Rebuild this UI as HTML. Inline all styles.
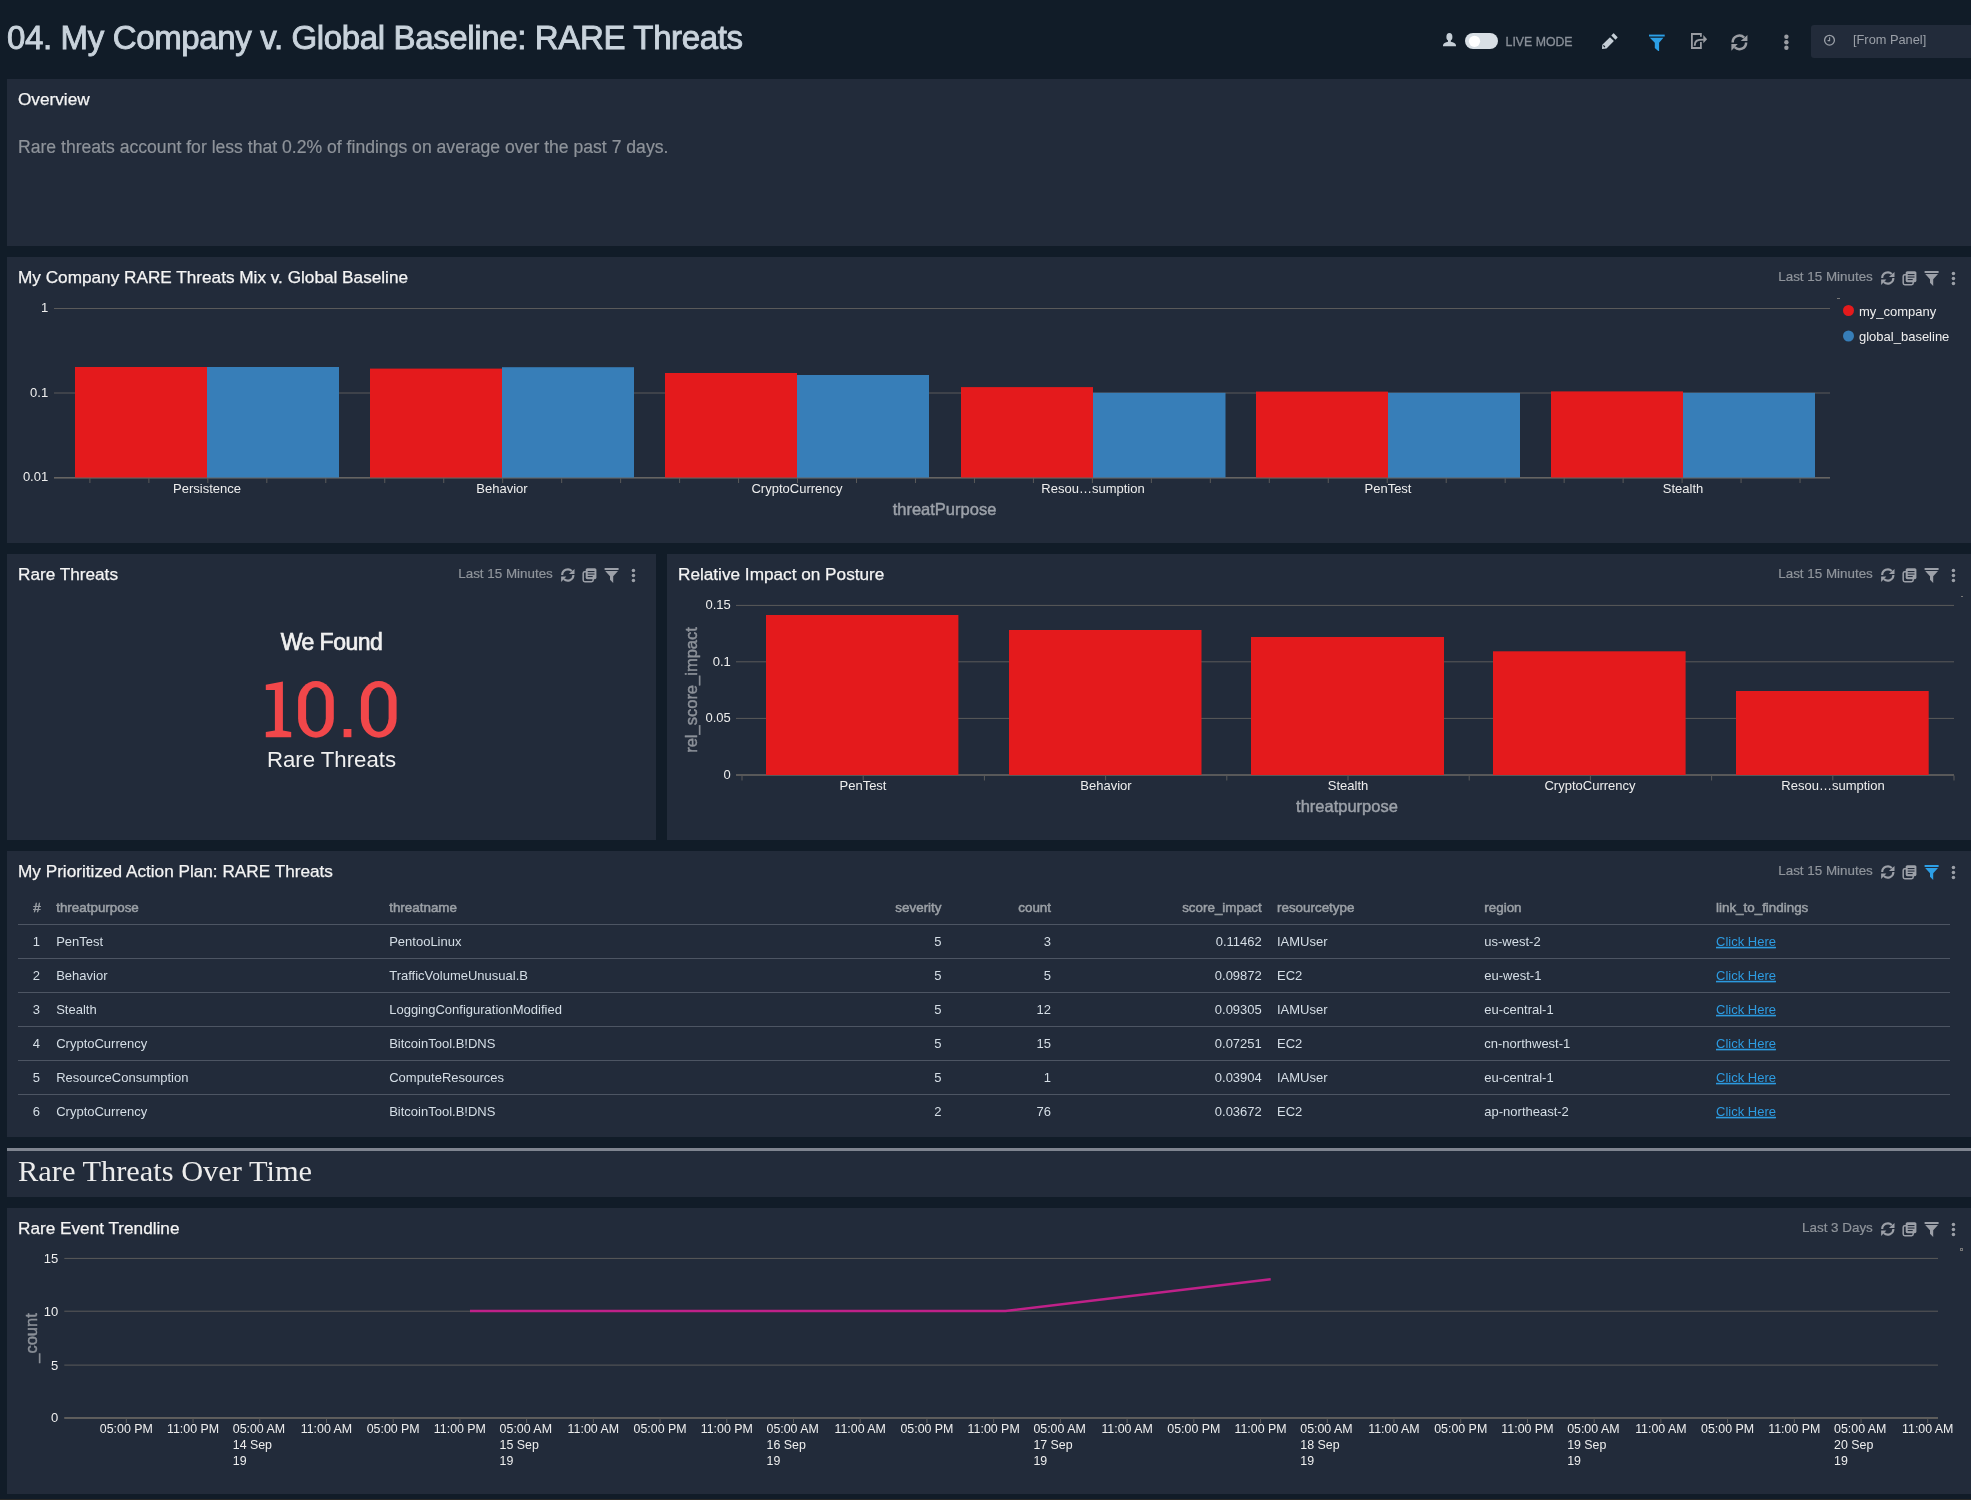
<!DOCTYPE html>
<html><head><meta charset="utf-8">
<style>
html,body{margin:0;padding:0}
body{width:1971px;height:1500px;overflow:hidden;background:#111c28;position:relative;font-family:"Liberation Sans",sans-serif;color:#f0f0f0}
#w{position:absolute;left:0;top:0;width:1971px;height:1500px;will-change:transform}
.a{position:absolute;white-space:nowrap}
.panel{position:absolute;background:#222b3a}
.ptitle{position:absolute;left:11px;top:10px;font-size:17.2px;color:#f4f4f4;white-space:nowrap;-webkit-text-stroke:0.25px #f4f4f4}
svg{position:absolute;left:0;top:0}
</style></head><body><div id="w">
<div class="a" style="left:7px;top:19px;font-size:33px;letter-spacing:-0.36px;color:#c9d3dc;-webkit-text-stroke:0.9px #c9d3dc">04. My Company v. Global Baseline: RARE Threats</div>
<div class="a" style="left:1811px;top:25px;width:170px;height:33px;border-radius:3px;background:#222b3a"></div>
<div class="a" style="left:1853px;top:32px;font-size:12.8px;color:#9ba0a8">[From Panel]</div>
<div class="panel" style="left:7px;top:79px;width:1969px;height:167px;">
<div class="ptitle">Overview</div>
</div>
<div class="a" style="left:18px;top:137px;font-size:17.6px;color:#8e939a;-webkit-text-stroke:0.2px #8e939a">Rare threats account for less that 0.2% of findings on average over the past 7 days.</div>
<div class="panel" style="left:7px;top:257px;width:1969px;height:286px;">
<div class="ptitle">My Company RARE Threats Mix v. Global Baseline</div>
</div>
<div class="panel" style="left:7px;top:554px;width:649px;height:286px;">
<div class="ptitle">Rare Threats</div>
</div>
<div class="panel" style="left:667px;top:554px;width:1309px;height:286px;">
<div class="ptitle">Relative Impact on Posture</div>
</div>
<div class="panel" style="left:7px;top:851px;width:1969px;height:286px;">
<div class="ptitle">My Prioritized Action Plan: RARE Threats</div>
</div>
<div class="panel" style="left:7px;top:1148px;width:1969px;height:49px;border-top:3px solid #7f8590;box-sizing:border-box"></div>
<div class="a" style="left:18px;top:1154px;font-family:'Liberation Serif',serif;font-size:30.4px;color:#ececec">Rare Threats Over Time</div>
<div class="panel" style="left:7px;top:1208px;width:1969px;height:286px;">
<div class="ptitle">Rare Event Trendline</div>
</div>
<div class="a" style="left:7px;width:649px;top:629px;text-align:center;font-size:23px;letter-spacing:-0.5px;-webkit-text-stroke:0.7px #f0f0f0;color:#f0f0f0">We Found</div>
<div class="a" style="left:7px;width:649px;top:747px;text-align:center;font-size:22.2px;color:#f0f0f0">Rare Threats</div>
<svg width="1971" height="1500" viewBox="0 0 1971 1500"><rect x="54" y="308.0" width="1776" height="1" fill="#5a5a5a" />
<rect x="54" y="392.5" width="1776" height="1" fill="#5a5a5a" />
<rect x="54" y="477.0" width="1776" height="1" fill="#5a5a5a" />
<rect x="54" y="477" width="1776" height="1.6" fill="#666462" />
<text x="48.2" y="312" font-family="Liberation Sans" font-size="13" fill="#eeeeee" text-anchor="end" font-weight="normal" >1</text>
<text x="48.2" y="396.5" font-family="Liberation Sans" font-size="13" fill="#eeeeee" text-anchor="end" font-weight="normal" >0.1</text>
<text x="48.2" y="480.5" font-family="Liberation Sans" font-size="13" fill="#eeeeee" text-anchor="end" font-weight="normal" >0.01</text>
<rect x="75" y="367" width="132" height="110.5" fill="#e41a1c" />
<rect x="370" y="368.6" width="132" height="108.89999999999998" fill="#e41a1c" />
<rect x="665" y="373" width="132" height="104.5" fill="#e41a1c" />
<rect x="961" y="387.1" width="132" height="90.39999999999998" fill="#e41a1c" />
<rect x="1256" y="391.6" width="132" height="85.89999999999998" fill="#e41a1c" />
<rect x="1551" y="391.4" width="132" height="86.10000000000002" fill="#e41a1c" />
<rect x="207" y="367" width="132" height="110.5" fill="#377eb8" />
<rect x="502" y="367.2" width="132" height="110.30000000000001" fill="#377eb8" />
<rect x="797" y="375" width="132" height="102.5" fill="#377eb8" />
<rect x="1093" y="392.8" width="132.5" height="84.69999999999999" fill="#377eb8" />
<rect x="1388" y="392.8" width="132" height="84.69999999999999" fill="#377eb8" />
<rect x="1683" y="392.8" width="132" height="84.69999999999999" fill="#377eb8" />
<rect x="89.4" y="478" width="1" height="5" fill="#5a5a5a" />
<rect x="148.37" y="478" width="1" height="5" fill="#5a5a5a" />
<rect x="207.34" y="478" width="1" height="5" fill="#5a5a5a" />
<rect x="266.31" y="478" width="1" height="5" fill="#5a5a5a" />
<rect x="325.28" y="478" width="1" height="5" fill="#5a5a5a" />
<rect x="384.25" y="478" width="1" height="5" fill="#5a5a5a" />
<rect x="443.22" y="478" width="1" height="5" fill="#5a5a5a" />
<rect x="502.18999999999994" y="478" width="1" height="5" fill="#5a5a5a" />
<rect x="561.16" y="478" width="1" height="5" fill="#5a5a5a" />
<rect x="620.13" y="478" width="1" height="5" fill="#5a5a5a" />
<rect x="679.1" y="478" width="1" height="5" fill="#5a5a5a" />
<rect x="738.0699999999999" y="478" width="1" height="5" fill="#5a5a5a" />
<rect x="797.04" y="478" width="1" height="5" fill="#5a5a5a" />
<rect x="856.01" y="478" width="1" height="5" fill="#5a5a5a" />
<rect x="914.9799999999999" y="478" width="1" height="5" fill="#5a5a5a" />
<rect x="973.9499999999999" y="478" width="1" height="5" fill="#5a5a5a" />
<rect x="1032.92" y="478" width="1" height="5" fill="#5a5a5a" />
<rect x="1091.89" y="478" width="1" height="5" fill="#5a5a5a" />
<rect x="1150.8600000000001" y="478" width="1" height="5" fill="#5a5a5a" />
<rect x="1209.8300000000002" y="478" width="1" height="5" fill="#5a5a5a" />
<rect x="1268.8000000000002" y="478" width="1" height="5" fill="#5a5a5a" />
<rect x="1327.77" y="478" width="1" height="5" fill="#5a5a5a" />
<rect x="1386.74" y="478" width="1" height="5" fill="#5a5a5a" />
<rect x="1445.71" y="478" width="1" height="5" fill="#5a5a5a" />
<rect x="1504.68" y="478" width="1" height="5" fill="#5a5a5a" />
<rect x="1563.65" y="478" width="1" height="5" fill="#5a5a5a" />
<rect x="1622.6200000000001" y="478" width="1" height="5" fill="#5a5a5a" />
<rect x="1681.5900000000001" y="478" width="1" height="5" fill="#5a5a5a" />
<rect x="1740.56" y="478" width="1" height="5" fill="#5a5a5a" />
<rect x="1799.53" y="478" width="1" height="5" fill="#5a5a5a" />
<text x="207" y="493" font-family="Liberation Sans" font-size="13" fill="#eeeeee" text-anchor="middle" font-weight="normal" >Persistence</text>
<text x="502" y="493" font-family="Liberation Sans" font-size="13" fill="#eeeeee" text-anchor="middle" font-weight="normal" >Behavior</text>
<text x="797" y="493" font-family="Liberation Sans" font-size="13" fill="#eeeeee" text-anchor="middle" font-weight="normal" >CryptoCurrency</text>
<text x="1093" y="493" font-family="Liberation Sans" font-size="13" fill="#eeeeee" text-anchor="middle" font-weight="normal" >Resou…sumption</text>
<text x="1388" y="493" font-family="Liberation Sans" font-size="13" fill="#eeeeee" text-anchor="middle" font-weight="normal" >PenTest</text>
<text x="1683" y="493" font-family="Liberation Sans" font-size="13" fill="#eeeeee" text-anchor="middle" font-weight="normal" >Stealth</text>
<text x="944.5" y="515.2" font-family="Liberation Sans" font-size="16.5" fill="#9ca1a9" text-anchor="middle" font-weight="normal" stroke="#9ca1a9" stroke-width="0.45">threatPurpose</text>
<circle cx="1848.5" cy="310.5" r="5.5" fill="#e41a1c"/>
<circle cx="1848.5" cy="336" r="5.5" fill="#377eb8"/>
<text x="1859" y="315.5" font-family="Liberation Sans" font-size="13" fill="#eeeeee" text-anchor="start" font-weight="normal" >my_company</text>
<text x="1859" y="341" font-family="Liberation Sans" font-size="13" fill="#eeeeee" text-anchor="start" font-weight="normal" >global_baseline</text>
<rect x="1837" y="298" width="3" height="1" fill="#777" />
<text x="1872.8" y="281" font-family="Liberation Sans" font-size="13.4" fill="#8f949b" text-anchor="end" font-weight="normal" stroke="#8f949b" stroke-width="0.2">Last 15 Minutes</text>
<g transform="translate(1880.8,271) scale(1.0)" fill="none" stroke="#9ca0a8" stroke-width="2.1"><path d="M1.4 7.0 A5.6 5.6 0 0 1 10.96 3.04"/><path d="M12.6 7.0 A5.6 5.6 0 0 1 3.04 10.96"/></g>
<g transform="translate(1880.8,271) scale(1.0)" fill="#9ca0a8"><path d="M13.7 0.9 L13.7 5.9 L8.1 5.9 Z"/><path d="M0.3 13.9 L0.3 8.4 L5.6 8.4 Z"/></g>
<g transform="translate(1902.4,271.2)"><rect x="0.8" y="3.5" width="10" height="10" rx="1.6" fill="none" stroke="#9ca0a8" stroke-width="1.5"/><rect x="3.3" y="0" width="10.7" height="11" rx="1.6" fill="#9ca0a8"/><rect x="5.3" y="2.8" width="6.8" height="1.1" fill="#222b3a"/><rect x="5.3" y="5.3" width="6.8" height="1.1" fill="#222b3a"/><rect x="5.3" y="7.8" width="5" height="1.1" fill="#222b3a"/></g>
<g transform="translate(1924.6,271) scale(1.0)" fill="#9ca0a8"><rect x="0" y="0" width="14" height="2"/><path d="M0.6 3 L13.4 3 L8.6 8.2 L8.6 15 L5.4 11.8 L5.4 8.2 Z"/></g>
<circle cx="1953.45" cy="273.55" r="1.75" fill="#9ca0a8"/>
<circle cx="1953.45" cy="278.55" r="1.75" fill="#9ca0a8"/>
<circle cx="1953.45" cy="283.55" r="1.75" fill="#9ca0a8"/>
<text x="552.8" y="578" font-family="Liberation Sans" font-size="13.4" fill="#8f949b" text-anchor="end" font-weight="normal" stroke="#8f949b" stroke-width="0.2">Last 15 Minutes</text>
<g transform="translate(560.8,568) scale(1.0)" fill="none" stroke="#9ca0a8" stroke-width="2.1"><path d="M1.4 7.0 A5.6 5.6 0 0 1 10.96 3.04"/><path d="M12.6 7.0 A5.6 5.6 0 0 1 3.04 10.96"/></g>
<g transform="translate(560.8,568) scale(1.0)" fill="#9ca0a8"><path d="M13.7 0.9 L13.7 5.9 L8.1 5.9 Z"/><path d="M0.3 13.9 L0.3 8.4 L5.6 8.4 Z"/></g>
<g transform="translate(582.4,568.2)"><rect x="0.8" y="3.5" width="10" height="10" rx="1.6" fill="none" stroke="#9ca0a8" stroke-width="1.5"/><rect x="3.3" y="0" width="10.7" height="11" rx="1.6" fill="#9ca0a8"/><rect x="5.3" y="2.8" width="6.8" height="1.1" fill="#222b3a"/><rect x="5.3" y="5.3" width="6.8" height="1.1" fill="#222b3a"/><rect x="5.3" y="7.8" width="5" height="1.1" fill="#222b3a"/></g>
<g transform="translate(604.6,568) scale(1.0)" fill="#9ca0a8"><rect x="0" y="0" width="14" height="2"/><path d="M0.6 3 L13.4 3 L8.6 8.2 L8.6 15 L5.4 11.8 L5.4 8.2 Z"/></g>
<circle cx="633.45" cy="570.55" r="1.75" fill="#9ca0a8"/>
<circle cx="633.45" cy="575.55" r="1.75" fill="#9ca0a8"/>
<circle cx="633.45" cy="580.55" r="1.75" fill="#9ca0a8"/>
<path d="M265.8 684.8 L282.9 681.6 L282.9 730.6 L291.2 731.9 L291.2 737.2 L265.8 737.2 L265.8 731.9 L274.9 730.6 L274.9 690.1 L265.8 690.1 Z" fill="#f2474a"/>
<rect x="298.1" y="681" width="35.7" height="56.7" rx="17.85" ry="19.5" fill="#f2474a"/>
<rect x="306.1" y="687.2" width="19.7" height="44.6" rx="9.85" ry="13.5" fill="#222b3a"/>
<rect x="360.90000000000003" y="681" width="35.7" height="56.7" rx="17.85" ry="19.5" fill="#f2474a"/>
<rect x="368.90000000000003" y="687.2" width="19.7" height="44.6" rx="9.85" ry="13.5" fill="#222b3a"/>
<rect x="343.6" y="729" width="7.8" height="8.2" fill="#f2474a"/>
<text x="1872.8" y="578" font-family="Liberation Sans" font-size="13.4" fill="#8f949b" text-anchor="end" font-weight="normal" stroke="#8f949b" stroke-width="0.2">Last 15 Minutes</text>
<g transform="translate(1880.8,568) scale(1.0)" fill="none" stroke="#9ca0a8" stroke-width="2.1"><path d="M1.4 7.0 A5.6 5.6 0 0 1 10.96 3.04"/><path d="M12.6 7.0 A5.6 5.6 0 0 1 3.04 10.96"/></g>
<g transform="translate(1880.8,568) scale(1.0)" fill="#9ca0a8"><path d="M13.7 0.9 L13.7 5.9 L8.1 5.9 Z"/><path d="M0.3 13.9 L0.3 8.4 L5.6 8.4 Z"/></g>
<g transform="translate(1902.4,568.2)"><rect x="0.8" y="3.5" width="10" height="10" rx="1.6" fill="none" stroke="#9ca0a8" stroke-width="1.5"/><rect x="3.3" y="0" width="10.7" height="11" rx="1.6" fill="#9ca0a8"/><rect x="5.3" y="2.8" width="6.8" height="1.1" fill="#222b3a"/><rect x="5.3" y="5.3" width="6.8" height="1.1" fill="#222b3a"/><rect x="5.3" y="7.8" width="5" height="1.1" fill="#222b3a"/></g>
<g transform="translate(1924.6,568) scale(1.0)" fill="#9ca0a8"><rect x="0" y="0" width="14" height="2"/><path d="M0.6 3 L13.4 3 L8.6 8.2 L8.6 15 L5.4 11.8 L5.4 8.2 Z"/></g>
<circle cx="1953.45" cy="570.55" r="1.75" fill="#9ca0a8"/>
<circle cx="1953.45" cy="575.55" r="1.75" fill="#9ca0a8"/>
<circle cx="1953.45" cy="580.55" r="1.75" fill="#9ca0a8"/>
<rect x="736" y="604.9" width="1218" height="1" fill="#5a5a5a" />
<rect x="736" y="661.3" width="1218" height="1" fill="#5a5a5a" />
<rect x="736" y="717.9" width="1218" height="1" fill="#5a5a5a" />
<rect x="736" y="774.2" width="1218" height="1.6" fill="#666462" />
<text x="730.8" y="609.1999999999999" font-family="Liberation Sans" font-size="13" fill="#eeeeee" text-anchor="end" font-weight="normal" >0.15</text>
<text x="730.8" y="665.5999999999999" font-family="Liberation Sans" font-size="13" fill="#eeeeee" text-anchor="end" font-weight="normal" >0.1</text>
<text x="730.8" y="722.1999999999999" font-family="Liberation Sans" font-size="13" fill="#eeeeee" text-anchor="end" font-weight="normal" >0.05</text>
<text x="730.8" y="778.5999999999999" font-family="Liberation Sans" font-size="13" fill="#eeeeee" text-anchor="end" font-weight="normal" >0</text>
<rect x="766" y="615" width="192.39999999999998" height="160" fill="#e41a1c" />
<rect x="1009" y="630" width="192.5" height="145" fill="#e41a1c" />
<rect x="1251" y="637" width="193" height="138" fill="#e41a1c" />
<rect x="1493" y="651.3" width="192.5999999999999" height="123.70000000000005" fill="#e41a1c" />
<rect x="1736" y="691" width="192.70000000000005" height="84" fill="#e41a1c" />
<rect x="741.5" y="775.5" width="1" height="5" fill="#5a5a5a" />
<rect x="862.7" y="775.5" width="1" height="5" fill="#5a5a5a" />
<rect x="983.9" y="775.5" width="1" height="5" fill="#5a5a5a" />
<rect x="1105.1" y="775.5" width="1" height="5" fill="#5a5a5a" />
<rect x="1226.3" y="775.5" width="1" height="5" fill="#5a5a5a" />
<rect x="1347.5" y="775.5" width="1" height="5" fill="#5a5a5a" />
<rect x="1468.7" y="775.5" width="1" height="5" fill="#5a5a5a" />
<rect x="1589.9" y="775.5" width="1" height="5" fill="#5a5a5a" />
<rect x="1711.1" y="775.5" width="1" height="5" fill="#5a5a5a" />
<rect x="1832.3" y="775.5" width="1" height="5" fill="#5a5a5a" />
<rect x="1953.5" y="775.5" width="1" height="5" fill="#5a5a5a" />
<text x="863" y="789.6" font-family="Liberation Sans" font-size="13" fill="#eeeeee" text-anchor="middle" font-weight="normal" >PenTest</text>
<text x="1106" y="789.6" font-family="Liberation Sans" font-size="13" fill="#eeeeee" text-anchor="middle" font-weight="normal" >Behavior</text>
<text x="1348" y="789.6" font-family="Liberation Sans" font-size="13" fill="#eeeeee" text-anchor="middle" font-weight="normal" >Stealth</text>
<text x="1590" y="789.6" font-family="Liberation Sans" font-size="13" fill="#eeeeee" text-anchor="middle" font-weight="normal" >CryptoCurrency</text>
<text x="1833" y="789.6" font-family="Liberation Sans" font-size="13" fill="#eeeeee" text-anchor="middle" font-weight="normal" >Resou…sumption</text>
<text x="1347" y="812" font-family="Liberation Sans" font-size="16.5" fill="#9ca1a9" text-anchor="middle" font-weight="normal" stroke="#9ca1a9" stroke-width="0.45">threatpurpose</text>
<text x="0" y="0" font-family="Liberation Sans" font-size="16.5" fill="#8c9199" stroke="#8c9199" stroke-width="0.45" text-anchor="middle" transform="translate(697,690) rotate(-90)">rel_score_impact</text>
<rect x="1961" y="596" width="2" height="1" fill="#777" />
<text x="1872.8" y="875" font-family="Liberation Sans" font-size="13.4" fill="#8f949b" text-anchor="end" font-weight="normal" stroke="#8f949b" stroke-width="0.2">Last 15 Minutes</text>
<g transform="translate(1880.8,865) scale(1.0)" fill="none" stroke="#9ca0a8" stroke-width="2.1"><path d="M1.4 7.0 A5.6 5.6 0 0 1 10.96 3.04"/><path d="M12.6 7.0 A5.6 5.6 0 0 1 3.04 10.96"/></g>
<g transform="translate(1880.8,865) scale(1.0)" fill="#9ca0a8"><path d="M13.7 0.9 L13.7 5.9 L8.1 5.9 Z"/><path d="M0.3 13.9 L0.3 8.4 L5.6 8.4 Z"/></g>
<g transform="translate(1902.4,865.2)"><rect x="0.8" y="3.5" width="10" height="10" rx="1.6" fill="none" stroke="#9ca0a8" stroke-width="1.5"/><rect x="3.3" y="0" width="10.7" height="11" rx="1.6" fill="#9ca0a8"/><rect x="5.3" y="2.8" width="6.8" height="1.1" fill="#222b3a"/><rect x="5.3" y="5.3" width="6.8" height="1.1" fill="#222b3a"/><rect x="5.3" y="7.8" width="5" height="1.1" fill="#222b3a"/></g>
<g transform="translate(1924.6,865) scale(1.0)" fill="#2d9fe6"><rect x="0" y="0" width="14" height="2"/><path d="M0.6 3 L13.4 3 L8.6 8.2 L8.6 15 L5.4 11.8 L5.4 8.2 Z"/></g>
<circle cx="1953.45" cy="867.55" r="1.75" fill="#9ca0a8"/>
<circle cx="1953.45" cy="872.55" r="1.75" fill="#9ca0a8"/>
<circle cx="1953.45" cy="877.55" r="1.75" fill="#9ca0a8"/>
<text x="33.3" y="911.8" font-family="Liberation Sans" font-size="13.4" fill="#9ba0a6" text-anchor="start" font-weight="normal" stroke="#9ba0a6" stroke-width="0.5">#</text>
<text x="56.2" y="911.8" font-family="Liberation Sans" font-size="13.4" fill="#9ba0a6" text-anchor="start" font-weight="normal" stroke="#9ba0a6" stroke-width="0.5">threatpurpose</text>
<text x="389.2" y="911.8" font-family="Liberation Sans" font-size="13.4" fill="#9ba0a6" text-anchor="start" font-weight="normal" stroke="#9ba0a6" stroke-width="0.5">threatname</text>
<text x="941.5" y="911.8" font-family="Liberation Sans" font-size="13.4" fill="#9ba0a6" text-anchor="end" font-weight="normal" stroke="#9ba0a6" stroke-width="0.5">severity</text>
<text x="1051" y="911.8" font-family="Liberation Sans" font-size="13.4" fill="#9ba0a6" text-anchor="end" font-weight="normal" stroke="#9ba0a6" stroke-width="0.5">count</text>
<text x="1261.8" y="911.8" font-family="Liberation Sans" font-size="13.4" fill="#9ba0a6" text-anchor="end" font-weight="normal" stroke="#9ba0a6" stroke-width="0.5">score_impact</text>
<text x="1277" y="911.8" font-family="Liberation Sans" font-size="13.4" fill="#9ba0a6" text-anchor="start" font-weight="normal" stroke="#9ba0a6" stroke-width="0.5">resourcetype</text>
<text x="1484.3" y="911.8" font-family="Liberation Sans" font-size="13.4" fill="#9ba0a6" text-anchor="start" font-weight="normal" stroke="#9ba0a6" stroke-width="0.5">region</text>
<text x="1716" y="911.8" font-family="Liberation Sans" font-size="13.4" fill="#9ba0a6" text-anchor="start" font-weight="normal" stroke="#9ba0a6" stroke-width="0.5">link_to_findings</text>
<rect x="18" y="924.0" width="1932" height="1" fill="#4d5563" />
<text x="40" y="945.8" font-family="Liberation Sans" font-size="13" fill="#d5dee6" text-anchor="end" font-weight="normal" >1</text>
<text x="56.2" y="945.8" font-family="Liberation Sans" font-size="13" fill="#d5dee6" text-anchor="start" font-weight="normal" >PenTest</text>
<text x="389.2" y="945.8" font-family="Liberation Sans" font-size="13" fill="#d5dee6" text-anchor="start" font-weight="normal" >PentooLinux</text>
<text x="941.5" y="945.8" font-family="Liberation Sans" font-size="13" fill="#d5dee6" text-anchor="end" font-weight="normal" >5</text>
<text x="1051" y="945.8" font-family="Liberation Sans" font-size="13" fill="#d5dee6" text-anchor="end" font-weight="normal" >3</text>
<text x="1261.8" y="945.8" font-family="Liberation Sans" font-size="13" fill="#d5dee6" text-anchor="end" font-weight="normal" >0.11462</text>
<text x="1277" y="945.8" font-family="Liberation Sans" font-size="13" fill="#d5dee6" text-anchor="start" font-weight="normal" >IAMUser</text>
<text x="1484.3" y="945.8" font-family="Liberation Sans" font-size="13" fill="#d5dee6" text-anchor="start" font-weight="normal" >us-west-2</text>
<text x="1716" y="945.8" font-family="Liberation Sans" font-size="13" fill="#2d9be0" text-anchor="start" font-weight="normal" text-decoration="underline">Click Here</text>
<rect x="1716" y="947.3" width="59.7" height="1" fill="#2d9be0" />
<rect x="18" y="958.0" width="1932" height="1" fill="#4d5563" />
<text x="40" y="979.8" font-family="Liberation Sans" font-size="13" fill="#d5dee6" text-anchor="end" font-weight="normal" >2</text>
<text x="56.2" y="979.8" font-family="Liberation Sans" font-size="13" fill="#d5dee6" text-anchor="start" font-weight="normal" >Behavior</text>
<text x="389.2" y="979.8" font-family="Liberation Sans" font-size="13" fill="#d5dee6" text-anchor="start" font-weight="normal" >TrafficVolumeUnusual.B</text>
<text x="941.5" y="979.8" font-family="Liberation Sans" font-size="13" fill="#d5dee6" text-anchor="end" font-weight="normal" >5</text>
<text x="1051" y="979.8" font-family="Liberation Sans" font-size="13" fill="#d5dee6" text-anchor="end" font-weight="normal" >5</text>
<text x="1261.8" y="979.8" font-family="Liberation Sans" font-size="13" fill="#d5dee6" text-anchor="end" font-weight="normal" >0.09872</text>
<text x="1277" y="979.8" font-family="Liberation Sans" font-size="13" fill="#d5dee6" text-anchor="start" font-weight="normal" >EC2</text>
<text x="1484.3" y="979.8" font-family="Liberation Sans" font-size="13" fill="#d5dee6" text-anchor="start" font-weight="normal" >eu-west-1</text>
<text x="1716" y="979.8" font-family="Liberation Sans" font-size="13" fill="#2d9be0" text-anchor="start" font-weight="normal" text-decoration="underline">Click Here</text>
<rect x="1716" y="981.3" width="59.7" height="1" fill="#2d9be0" />
<rect x="18" y="992.0" width="1932" height="1" fill="#4d5563" />
<text x="40" y="1013.8" font-family="Liberation Sans" font-size="13" fill="#d5dee6" text-anchor="end" font-weight="normal" >3</text>
<text x="56.2" y="1013.8" font-family="Liberation Sans" font-size="13" fill="#d5dee6" text-anchor="start" font-weight="normal" >Stealth</text>
<text x="389.2" y="1013.8" font-family="Liberation Sans" font-size="13" fill="#d5dee6" text-anchor="start" font-weight="normal" >LoggingConfigurationModified</text>
<text x="941.5" y="1013.8" font-family="Liberation Sans" font-size="13" fill="#d5dee6" text-anchor="end" font-weight="normal" >5</text>
<text x="1051" y="1013.8" font-family="Liberation Sans" font-size="13" fill="#d5dee6" text-anchor="end" font-weight="normal" >12</text>
<text x="1261.8" y="1013.8" font-family="Liberation Sans" font-size="13" fill="#d5dee6" text-anchor="end" font-weight="normal" >0.09305</text>
<text x="1277" y="1013.8" font-family="Liberation Sans" font-size="13" fill="#d5dee6" text-anchor="start" font-weight="normal" >IAMUser</text>
<text x="1484.3" y="1013.8" font-family="Liberation Sans" font-size="13" fill="#d5dee6" text-anchor="start" font-weight="normal" >eu-central-1</text>
<text x="1716" y="1013.8" font-family="Liberation Sans" font-size="13" fill="#2d9be0" text-anchor="start" font-weight="normal" text-decoration="underline">Click Here</text>
<rect x="1716" y="1015.3" width="59.7" height="1" fill="#2d9be0" />
<rect x="18" y="1026.0" width="1932" height="1" fill="#4d5563" />
<text x="40" y="1047.8" font-family="Liberation Sans" font-size="13" fill="#d5dee6" text-anchor="end" font-weight="normal" >4</text>
<text x="56.2" y="1047.8" font-family="Liberation Sans" font-size="13" fill="#d5dee6" text-anchor="start" font-weight="normal" >CryptoCurrency</text>
<text x="389.2" y="1047.8" font-family="Liberation Sans" font-size="13" fill="#d5dee6" text-anchor="start" font-weight="normal" >BitcoinTool.B!DNS</text>
<text x="941.5" y="1047.8" font-family="Liberation Sans" font-size="13" fill="#d5dee6" text-anchor="end" font-weight="normal" >5</text>
<text x="1051" y="1047.8" font-family="Liberation Sans" font-size="13" fill="#d5dee6" text-anchor="end" font-weight="normal" >15</text>
<text x="1261.8" y="1047.8" font-family="Liberation Sans" font-size="13" fill="#d5dee6" text-anchor="end" font-weight="normal" >0.07251</text>
<text x="1277" y="1047.8" font-family="Liberation Sans" font-size="13" fill="#d5dee6" text-anchor="start" font-weight="normal" >EC2</text>
<text x="1484.3" y="1047.8" font-family="Liberation Sans" font-size="13" fill="#d5dee6" text-anchor="start" font-weight="normal" >cn-northwest-1</text>
<text x="1716" y="1047.8" font-family="Liberation Sans" font-size="13" fill="#2d9be0" text-anchor="start" font-weight="normal" text-decoration="underline">Click Here</text>
<rect x="1716" y="1049.3" width="59.7" height="1" fill="#2d9be0" />
<rect x="18" y="1060.0" width="1932" height="1" fill="#4d5563" />
<text x="40" y="1081.8" font-family="Liberation Sans" font-size="13" fill="#d5dee6" text-anchor="end" font-weight="normal" >5</text>
<text x="56.2" y="1081.8" font-family="Liberation Sans" font-size="13" fill="#d5dee6" text-anchor="start" font-weight="normal" >ResourceConsumption</text>
<text x="389.2" y="1081.8" font-family="Liberation Sans" font-size="13" fill="#d5dee6" text-anchor="start" font-weight="normal" >ComputeResources</text>
<text x="941.5" y="1081.8" font-family="Liberation Sans" font-size="13" fill="#d5dee6" text-anchor="end" font-weight="normal" >5</text>
<text x="1051" y="1081.8" font-family="Liberation Sans" font-size="13" fill="#d5dee6" text-anchor="end" font-weight="normal" >1</text>
<text x="1261.8" y="1081.8" font-family="Liberation Sans" font-size="13" fill="#d5dee6" text-anchor="end" font-weight="normal" >0.03904</text>
<text x="1277" y="1081.8" font-family="Liberation Sans" font-size="13" fill="#d5dee6" text-anchor="start" font-weight="normal" >IAMUser</text>
<text x="1484.3" y="1081.8" font-family="Liberation Sans" font-size="13" fill="#d5dee6" text-anchor="start" font-weight="normal" >eu-central-1</text>
<text x="1716" y="1081.8" font-family="Liberation Sans" font-size="13" fill="#2d9be0" text-anchor="start" font-weight="normal" text-decoration="underline">Click Here</text>
<rect x="1716" y="1083.3" width="59.7" height="1" fill="#2d9be0" />
<rect x="18" y="1094.0" width="1932" height="1" fill="#4d5563" />
<text x="40" y="1115.8" font-family="Liberation Sans" font-size="13" fill="#d5dee6" text-anchor="end" font-weight="normal" >6</text>
<text x="56.2" y="1115.8" font-family="Liberation Sans" font-size="13" fill="#d5dee6" text-anchor="start" font-weight="normal" >CryptoCurrency</text>
<text x="389.2" y="1115.8" font-family="Liberation Sans" font-size="13" fill="#d5dee6" text-anchor="start" font-weight="normal" >BitcoinTool.B!DNS</text>
<text x="941.5" y="1115.8" font-family="Liberation Sans" font-size="13" fill="#d5dee6" text-anchor="end" font-weight="normal" >2</text>
<text x="1051" y="1115.8" font-family="Liberation Sans" font-size="13" fill="#d5dee6" text-anchor="end" font-weight="normal" >76</text>
<text x="1261.8" y="1115.8" font-family="Liberation Sans" font-size="13" fill="#d5dee6" text-anchor="end" font-weight="normal" >0.03672</text>
<text x="1277" y="1115.8" font-family="Liberation Sans" font-size="13" fill="#d5dee6" text-anchor="start" font-weight="normal" >EC2</text>
<text x="1484.3" y="1115.8" font-family="Liberation Sans" font-size="13" fill="#d5dee6" text-anchor="start" font-weight="normal" >ap-northeast-2</text>
<text x="1716" y="1115.8" font-family="Liberation Sans" font-size="13" fill="#2d9be0" text-anchor="start" font-weight="normal" text-decoration="underline">Click Here</text>
<rect x="1716" y="1117.3" width="59.7" height="1" fill="#2d9be0" />
<text x="1872.8" y="1232" font-family="Liberation Sans" font-size="13.4" fill="#8f949b" text-anchor="end" font-weight="normal" stroke="#8f949b" stroke-width="0.2">Last 3 Days</text>
<g transform="translate(1880.8,1222) scale(1.0)" fill="none" stroke="#9ca0a8" stroke-width="2.1"><path d="M1.4 7.0 A5.6 5.6 0 0 1 10.96 3.04"/><path d="M12.6 7.0 A5.6 5.6 0 0 1 3.04 10.96"/></g>
<g transform="translate(1880.8,1222) scale(1.0)" fill="#9ca0a8"><path d="M13.7 0.9 L13.7 5.9 L8.1 5.9 Z"/><path d="M0.3 13.9 L0.3 8.4 L5.6 8.4 Z"/></g>
<g transform="translate(1902.4,1222.2)"><rect x="0.8" y="3.5" width="10" height="10" rx="1.6" fill="none" stroke="#9ca0a8" stroke-width="1.5"/><rect x="3.3" y="0" width="10.7" height="11" rx="1.6" fill="#9ca0a8"/><rect x="5.3" y="2.8" width="6.8" height="1.1" fill="#222b3a"/><rect x="5.3" y="5.3" width="6.8" height="1.1" fill="#222b3a"/><rect x="5.3" y="7.8" width="5" height="1.1" fill="#222b3a"/></g>
<g transform="translate(1924.6,1222) scale(1.0)" fill="#9ca0a8"><rect x="0" y="0" width="14" height="2"/><path d="M0.6 3 L13.4 3 L8.6 8.2 L8.6 15 L5.4 11.8 L5.4 8.2 Z"/></g>
<circle cx="1953.45" cy="1224.55" r="1.75" fill="#9ca0a8"/>
<circle cx="1953.45" cy="1229.55" r="1.75" fill="#9ca0a8"/>
<circle cx="1953.45" cy="1234.55" r="1.75" fill="#9ca0a8"/>
<rect x="64.3" y="1257.9" width="1873.7" height="1" fill="#5a5a5a" />
<text x="58.2" y="1262.9" font-family="Liberation Sans" font-size="13" fill="#eeeeee" text-anchor="end" font-weight="normal" >15</text>
<rect x="64.3" y="1310.7" width="1873.7" height="1" fill="#5a5a5a" />
<text x="58.2" y="1315.7" font-family="Liberation Sans" font-size="13" fill="#eeeeee" text-anchor="end" font-weight="normal" >10</text>
<rect x="64.3" y="1364.6" width="1873.7" height="1" fill="#5a5a5a" />
<text x="58.2" y="1369.6" font-family="Liberation Sans" font-size="13" fill="#eeeeee" text-anchor="end" font-weight="normal" >5</text>
<rect x="64.3" y="1417.4" width="1873.7" height="1" fill="#5a5a5a" />
<text x="58.2" y="1422.4" font-family="Liberation Sans" font-size="13" fill="#eeeeee" text-anchor="end" font-weight="normal" >0</text>
<rect x="64.3" y="1417.2" width="1873.7" height="1.6" fill="#666462" />
<text x="0" y="0" font-family="Liberation Sans" font-size="16.5" fill="#8c9199" stroke="#8c9199" stroke-width="0.45" text-anchor="middle" transform="translate(37,1338) rotate(-90)">_count</text>
<rect x="125.8" y="1418.5" width="1" height="4.5" fill="#5a5a5a" />
<text x="126.3" y="1432.6" font-family="Liberation Sans" font-size="12.4" fill="#eeeeee" text-anchor="middle" font-weight="normal" >05:00 PM</text>
<rect x="192.51999999999998" y="1418.5" width="1" height="4.5" fill="#5a5a5a" />
<text x="193.01999999999998" y="1432.6" font-family="Liberation Sans" font-size="12.4" fill="#eeeeee" text-anchor="middle" font-weight="normal" >11:00 PM</text>
<rect x="259.24" y="1418.5" width="1" height="4.5" fill="#5a5a5a" />
<text x="232.74" y="1432.6" font-family="Liberation Sans" font-size="12.4" fill="#eeeeee" text-anchor="start" font-weight="normal" >05:00 AM</text>
<text x="232.74" y="1448.6" font-family="Liberation Sans" font-size="12.4" fill="#eeeeee" text-anchor="start" font-weight="normal" >14 Sep</text>
<text x="232.74" y="1464.6" font-family="Liberation Sans" font-size="12.4" fill="#eeeeee" text-anchor="start" font-weight="normal" >19</text>
<rect x="325.96" y="1418.5" width="1" height="4.5" fill="#5a5a5a" />
<text x="326.46" y="1432.6" font-family="Liberation Sans" font-size="12.4" fill="#eeeeee" text-anchor="middle" font-weight="normal" >11:00 AM</text>
<rect x="392.68" y="1418.5" width="1" height="4.5" fill="#5a5a5a" />
<text x="393.18" y="1432.6" font-family="Liberation Sans" font-size="12.4" fill="#eeeeee" text-anchor="middle" font-weight="normal" >05:00 PM</text>
<rect x="459.40000000000003" y="1418.5" width="1" height="4.5" fill="#5a5a5a" />
<text x="459.90000000000003" y="1432.6" font-family="Liberation Sans" font-size="12.4" fill="#eeeeee" text-anchor="middle" font-weight="normal" >11:00 PM</text>
<rect x="526.12" y="1418.5" width="1" height="4.5" fill="#5a5a5a" />
<text x="499.62" y="1432.6" font-family="Liberation Sans" font-size="12.4" fill="#eeeeee" text-anchor="start" font-weight="normal" >05:00 AM</text>
<text x="499.62" y="1448.6" font-family="Liberation Sans" font-size="12.4" fill="#eeeeee" text-anchor="start" font-weight="normal" >15 Sep</text>
<text x="499.62" y="1464.6" font-family="Liberation Sans" font-size="12.4" fill="#eeeeee" text-anchor="start" font-weight="normal" >19</text>
<rect x="592.8399999999999" y="1418.5" width="1" height="4.5" fill="#5a5a5a" />
<text x="593.3399999999999" y="1432.6" font-family="Liberation Sans" font-size="12.4" fill="#eeeeee" text-anchor="middle" font-weight="normal" >11:00 AM</text>
<rect x="659.56" y="1418.5" width="1" height="4.5" fill="#5a5a5a" />
<text x="660.06" y="1432.6" font-family="Liberation Sans" font-size="12.4" fill="#eeeeee" text-anchor="middle" font-weight="normal" >05:00 PM</text>
<rect x="726.28" y="1418.5" width="1" height="4.5" fill="#5a5a5a" />
<text x="726.78" y="1432.6" font-family="Liberation Sans" font-size="12.4" fill="#eeeeee" text-anchor="middle" font-weight="normal" >11:00 PM</text>
<rect x="793.0" y="1418.5" width="1" height="4.5" fill="#5a5a5a" />
<text x="766.5" y="1432.6" font-family="Liberation Sans" font-size="12.4" fill="#eeeeee" text-anchor="start" font-weight="normal" >05:00 AM</text>
<text x="766.5" y="1448.6" font-family="Liberation Sans" font-size="12.4" fill="#eeeeee" text-anchor="start" font-weight="normal" >16 Sep</text>
<text x="766.5" y="1464.6" font-family="Liberation Sans" font-size="12.4" fill="#eeeeee" text-anchor="start" font-weight="normal" >19</text>
<rect x="859.7199999999999" y="1418.5" width="1" height="4.5" fill="#5a5a5a" />
<text x="860.2199999999999" y="1432.6" font-family="Liberation Sans" font-size="12.4" fill="#eeeeee" text-anchor="middle" font-weight="normal" >11:00 AM</text>
<rect x="926.4399999999999" y="1418.5" width="1" height="4.5" fill="#5a5a5a" />
<text x="926.9399999999999" y="1432.6" font-family="Liberation Sans" font-size="12.4" fill="#eeeeee" text-anchor="middle" font-weight="normal" >05:00 PM</text>
<rect x="993.16" y="1418.5" width="1" height="4.5" fill="#5a5a5a" />
<text x="993.66" y="1432.6" font-family="Liberation Sans" font-size="12.4" fill="#eeeeee" text-anchor="middle" font-weight="normal" >11:00 PM</text>
<rect x="1059.8799999999999" y="1418.5" width="1" height="4.5" fill="#5a5a5a" />
<text x="1033.3799999999999" y="1432.6" font-family="Liberation Sans" font-size="12.4" fill="#eeeeee" text-anchor="start" font-weight="normal" >05:00 AM</text>
<text x="1033.3799999999999" y="1448.6" font-family="Liberation Sans" font-size="12.4" fill="#eeeeee" text-anchor="start" font-weight="normal" >17 Sep</text>
<text x="1033.3799999999999" y="1464.6" font-family="Liberation Sans" font-size="12.4" fill="#eeeeee" text-anchor="start" font-weight="normal" >19</text>
<rect x="1126.6" y="1418.5" width="1" height="4.5" fill="#5a5a5a" />
<text x="1127.1" y="1432.6" font-family="Liberation Sans" font-size="12.4" fill="#eeeeee" text-anchor="middle" font-weight="normal" >11:00 AM</text>
<rect x="1193.32" y="1418.5" width="1" height="4.5" fill="#5a5a5a" />
<text x="1193.82" y="1432.6" font-family="Liberation Sans" font-size="12.4" fill="#eeeeee" text-anchor="middle" font-weight="normal" >05:00 PM</text>
<rect x="1260.04" y="1418.5" width="1" height="4.5" fill="#5a5a5a" />
<text x="1260.54" y="1432.6" font-family="Liberation Sans" font-size="12.4" fill="#eeeeee" text-anchor="middle" font-weight="normal" >11:00 PM</text>
<rect x="1326.76" y="1418.5" width="1" height="4.5" fill="#5a5a5a" />
<text x="1300.26" y="1432.6" font-family="Liberation Sans" font-size="12.4" fill="#eeeeee" text-anchor="start" font-weight="normal" >05:00 AM</text>
<text x="1300.26" y="1448.6" font-family="Liberation Sans" font-size="12.4" fill="#eeeeee" text-anchor="start" font-weight="normal" >18 Sep</text>
<text x="1300.26" y="1464.6" font-family="Liberation Sans" font-size="12.4" fill="#eeeeee" text-anchor="start" font-weight="normal" >19</text>
<rect x="1393.48" y="1418.5" width="1" height="4.5" fill="#5a5a5a" />
<text x="1393.98" y="1432.6" font-family="Liberation Sans" font-size="12.4" fill="#eeeeee" text-anchor="middle" font-weight="normal" >11:00 AM</text>
<rect x="1460.2" y="1418.5" width="1" height="4.5" fill="#5a5a5a" />
<text x="1460.7" y="1432.6" font-family="Liberation Sans" font-size="12.4" fill="#eeeeee" text-anchor="middle" font-weight="normal" >05:00 PM</text>
<rect x="1526.9199999999998" y="1418.5" width="1" height="4.5" fill="#5a5a5a" />
<text x="1527.4199999999998" y="1432.6" font-family="Liberation Sans" font-size="12.4" fill="#eeeeee" text-anchor="middle" font-weight="normal" >11:00 PM</text>
<rect x="1593.6399999999999" y="1418.5" width="1" height="4.5" fill="#5a5a5a" />
<text x="1567.1399999999999" y="1432.6" font-family="Liberation Sans" font-size="12.4" fill="#eeeeee" text-anchor="start" font-weight="normal" >05:00 AM</text>
<text x="1567.1399999999999" y="1448.6" font-family="Liberation Sans" font-size="12.4" fill="#eeeeee" text-anchor="start" font-weight="normal" >19 Sep</text>
<text x="1567.1399999999999" y="1464.6" font-family="Liberation Sans" font-size="12.4" fill="#eeeeee" text-anchor="start" font-weight="normal" >19</text>
<rect x="1660.36" y="1418.5" width="1" height="4.5" fill="#5a5a5a" />
<text x="1660.86" y="1432.6" font-family="Liberation Sans" font-size="12.4" fill="#eeeeee" text-anchor="middle" font-weight="normal" >11:00 AM</text>
<rect x="1727.08" y="1418.5" width="1" height="4.5" fill="#5a5a5a" />
<text x="1727.58" y="1432.6" font-family="Liberation Sans" font-size="12.4" fill="#eeeeee" text-anchor="middle" font-weight="normal" >05:00 PM</text>
<rect x="1793.8" y="1418.5" width="1" height="4.5" fill="#5a5a5a" />
<text x="1794.3" y="1432.6" font-family="Liberation Sans" font-size="12.4" fill="#eeeeee" text-anchor="middle" font-weight="normal" >11:00 PM</text>
<rect x="1860.52" y="1418.5" width="1" height="4.5" fill="#5a5a5a" />
<text x="1834.02" y="1432.6" font-family="Liberation Sans" font-size="12.4" fill="#eeeeee" text-anchor="start" font-weight="normal" >05:00 AM</text>
<text x="1834.02" y="1448.6" font-family="Liberation Sans" font-size="12.4" fill="#eeeeee" text-anchor="start" font-weight="normal" >20 Sep</text>
<text x="1834.02" y="1464.6" font-family="Liberation Sans" font-size="12.4" fill="#eeeeee" text-anchor="start" font-weight="normal" >19</text>
<rect x="1927.24" y="1418.5" width="1" height="4.5" fill="#5a5a5a" />
<text x="1927.74" y="1432.6" font-family="Liberation Sans" font-size="12.4" fill="#eeeeee" text-anchor="middle" font-weight="normal" >11:00 AM</text>
<polyline points="470,1311 1005.4,1311 1270.7,1279.2" fill="none" stroke="#bf2189" stroke-width="2.4" stroke-linejoin="round"/>
<rect x="1960.5" y="1248.5" width="2" height="2" fill="none" stroke="#777" stroke-width="1"/>
<g fill="#c5ced6"><ellipse cx="1449.4" cy="36.9" rx="3.0" ry="3.8"/><rect x="1448" y="39" width="2.8" height="3.5"/><path d="M1443 46.2 L1443 45.4 C1443 43.4 1445.5 42.2 1448 41.8 L1450.8 41.8 C1453.3 42.2 1456 43.4 1456 45.4 L1456 46.2 Z"/></g>
<rect x="1465" y="33" width="33" height="16" rx="8" fill="#d8dfe5"/>
<circle cx="1474.5" cy="41.3" r="5.6" fill="#ffffff"/>
<text x="1505.6" y="45.9" font-family="Liberation Sans" font-size="12.3" fill="#8a9099" text-anchor="start" font-weight="normal" stroke="#8a9099" stroke-width="0.3">LIVE MODE</text>
<g transform="translate(1598,30)" fill="#c5ced6"><path d="M12.0 7.3 L15.9 11.1 L8.5 18.6 L4.0 19.0 L4.3 14.8 Z"/><path d="M13.3 5.5 L15.2 3.5 Q15.6 3.1 16.0 3.5 L19.4 6.9 Q19.8 7.3 19.4 7.7 L17.5 9.7 Z"/><path d="M5.4 15.3 L6.9 17.2" stroke="#111c28" stroke-width="1.1"/></g>
<g transform="translate(1649,34)" fill="#2b9fe6"><rect x="0" y="0.6" width="15.7" height="1.9"/><path d="M0.8 3.8 L14.4 3.8 L10.1 8.8 L10.1 17.1 L9.2 17.1 L5.8 13.9 L5.8 8.8 Z"/></g>
<g transform="translate(1688,30)"><path d="M12.9 6.7 L12.9 4 L3.9 4 L3.9 18 L12.9 18 L12.9 12" fill="none" stroke="#9a9da3" stroke-width="1.8"/><path d="M6.7 15.8 C6.7 11 8.5 9.6 15.8 9.6" fill="none" stroke="#9a9da3" stroke-width="1.9"/><path d="M15.3 5.0 L19.1 9.3 L15.3 13.3 Z" fill="#9a9da3"/></g>
<g transform="translate(1731,34) scale(1.2)" fill="none" stroke="#9a9da3" stroke-width="2.1"><path d="M1.4 7.0 A5.6 5.6 0 0 1 10.96 3.04"/><path d="M12.6 7.0 A5.6 5.6 0 0 1 3.04 10.96"/></g>
<g transform="translate(1731,34) scale(1.2)" fill="#9a9da3"><path d="M13.7 0.9 L13.7 5.9 L8.1 5.9 Z"/><path d="M0.3 13.9 L0.3 8.4 L5.6 8.4 Z"/></g>
<circle cx="1786.4" cy="36.800000000000004" r="2.2" fill="#9a9da3"/>
<circle cx="1786.4" cy="42.300000000000004" r="2.2" fill="#9a9da3"/>
<circle cx="1786.4" cy="47.800000000000004" r="2.2" fill="#9a9da3"/></svg>
<svg width="1971" height="1500" style="pointer-events:none"><g fill="none" stroke="#9ba0a8"><circle cx="1829.5" cy="40.2" r="4.9" stroke-width="1.3"/><path d="M1829.6 37.3 L1829.6 40.6 L1827.6 40.6" stroke-width="1.1"/></g></svg>
<div class="a" style="left:0;top:1499px;width:1971px;height:1px;background:#2b2a28"></div>
</div></body></html>
